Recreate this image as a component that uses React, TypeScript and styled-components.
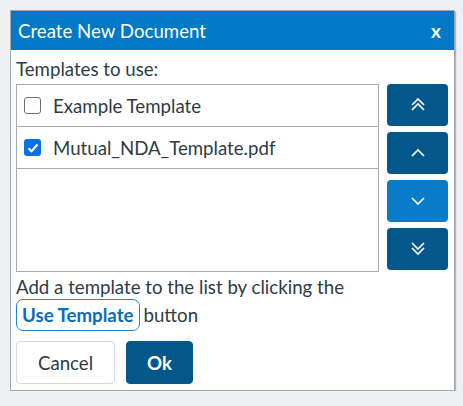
import React, { useState } from "react";
import styled, { createGlobalStyle } from "styled-components";

const GlobalStyle = createGlobalStyle`
  html, body {
    margin: 0;
    padding: 0;
    background: #eff0f4;
    font-family: Lato, "Noto Sans", sans-serif;
    color: #2d3b45;
  }
  * {
    box-sizing: border-box;
  }
`;

const Dialog = styled.div`
  margin: 10px 0 0 10px;
  width: 445px;
  background: #ffffff;
  border: 1px solid #a3a7ad;
  box-shadow: 1px 2px 1px rgba(0, 0, 0, 0.25);
`;

const Header = styled.div`
  height: 39px;
  background: #0079c6;
  color: #ffffff;
  display: flex;
  align-items: center;
  justify-content: space-between;
  padding: 0 13px 0 7px;
  font-size: 14pt;
`;

const CloseButton = styled.button`
  border: none;
  background: none;
  color: #ffffff;
  font-family: inherit;
  font-size: 19px;
  font-weight: 700;
  padding: 0;
  cursor: pointer;
`;

const Body = styled.div`
  padding: 4px 6px 6px 5px;
`;

const Label = styled.div`
  font-size: 14pt;
  line-height: 30px;
`;

const PickerRow = styled.div`
  display: flex;
  gap: 8px;
`;

const List = styled.div`
  width: 364px;
  height: 188px;
  border: 1px solid #a9adb3;
`;

const Row = styled.label`
  display: flex;
  align-items: center;
  height: 42px;
  padding-left: 7px;
  gap: 12px;
  border-bottom: 1px solid #a9adb3;
  font-size: 14pt;
  cursor: pointer;
`;

const Box = styled.span<{ checked: boolean }>`
  width: 17px;
  height: 17px;
  border-radius: 3px;
  border: ${({ checked }) => (checked ? "none" : "1.5px solid #6b7075")};
  background: ${({ checked }) => (checked ? "#0a6fe8" : "#ffffff")};
  display: flex;
  align-items: center;
  justify-content: center;
`;

const Arrows = styled.div`
  display: flex;
  flex-direction: column;
  gap: 6px;
`;

const ArrowButton = styled.button<{ active?: boolean }>`
  width: 61px;
  height: 42px;
  border: none;
  border-radius: 4px;
  background: ${({ active }) => (active ? "#0a7bc8" : "#04578a")};
  display: flex;
  align-items: center;
  justify-content: center;
  padding: 0;
  cursor: pointer;
`;

const Hint = styled.div`
  font-size: 14pt;
  line-height: 21px;
  margin-top: 5px;
`;

const HintLine = styled.div`
  display: flex;
  align-items: center;
  gap: 4px;
  margin-top: 1px;
`;

const LinkButton = styled.button`
  font-family: inherit;
  font-size: 14pt;
  font-weight: 700;
  color: #0a6db8;
  background: #ffffff;
  border: 1px solid #2a86cc;
  border-radius: 7px;
  height: 32px;
  padding: 0 5px;
  cursor: pointer;
`;

const Footer = styled.div`
  display: flex;
  gap: 11px;
  margin-top: 10px;
`;

const Button = styled.button<{ primary?: boolean }>`
  font-family: inherit;
  font-size: 14pt;
  height: 43px;
  border-radius: 4px;
  cursor: pointer;
  padding: 0;
  width: ${({ primary }) => (primary ? "67px" : "99px")};
  font-weight: ${({ primary }) => (primary ? 700 : 400)};
  color: ${({ primary }) => (primary ? "#ffffff" : "#2d3b45")};
  background: ${({ primary }) => (primary ? "#04578a" : "#ffffff")};
  border: 1px solid ${({ primary }) => (primary ? "#04578a" : "#d7dadd")};
`;

const Chevron = ({ dir, double }: { dir: "up" | "down"; double?: boolean }) => {
  const one = dir === "up" ? "M1 7 L7 1 L13 7" : "M1 1 L7 7 L13 1";
  return (
    <svg width="14" height={double ? 14 : 9} viewBox={double ? "0 0 14 14" : "0 0 14 9"} fill="none">
      <path d={one} stroke="#fff" strokeWidth="1.7" />
      {double && <path d={one} transform="translate(0 5)" stroke="#fff" strokeWidth="1.7" />}
    </svg>
  );
};

const Check = () => (
  <svg width="12" height="10" viewBox="0 0 12 10" fill="none">
    <path d="M1.5 5.2 L4.5 8.2 L10.5 1.5" stroke="#fff" strokeWidth="2.2" />
  </svg>
);

const templates = [
  { name: "Example Template", checked: false },
  { name: "Mutual_NDA_Template.pdf", checked: true },
];

export default function App() {
  const [items, setItems] = useState(templates);
  const toggle = (i: number) =>
    setItems(items.map((t, j) => (j === i ? { ...t, checked: !t.checked } : t)));

  return (
    <>
      <GlobalStyle />
      <Dialog>
        <Header>
          <span>Create New Document</span>
          <CloseButton>x</CloseButton>
        </Header>
        <Body>
          <Label>Templates to use:</Label>
          <PickerRow>
            <List>
              {items.map((t, i) => (
                <Row key={t.name} onClick={() => toggle(i)}>
                  <Box checked={t.checked}>{t.checked && <Check />}</Box>
                  {t.name}
                </Row>
              ))}
            </List>
            <Arrows>
              <ArrowButton>
                <Chevron dir="up" double />
              </ArrowButton>
              <ArrowButton>
                <Chevron dir="up" />
              </ArrowButton>
              <ArrowButton active>
                <Chevron dir="down" />
              </ArrowButton>
              <ArrowButton>
                <Chevron dir="down" double />
              </ArrowButton>
            </Arrows>
          </PickerRow>
          <Hint>
            Add a template to the list by clicking the
            <HintLine>
              <LinkButton>Use Template</LinkButton>
              button
            </HintLine>
          </Hint>
          <Footer>
            <Button>Cancel</Button>
            <Button primary>Ok</Button>
          </Footer>
        </Body>
      </Dialog>
    </>
  );
}
